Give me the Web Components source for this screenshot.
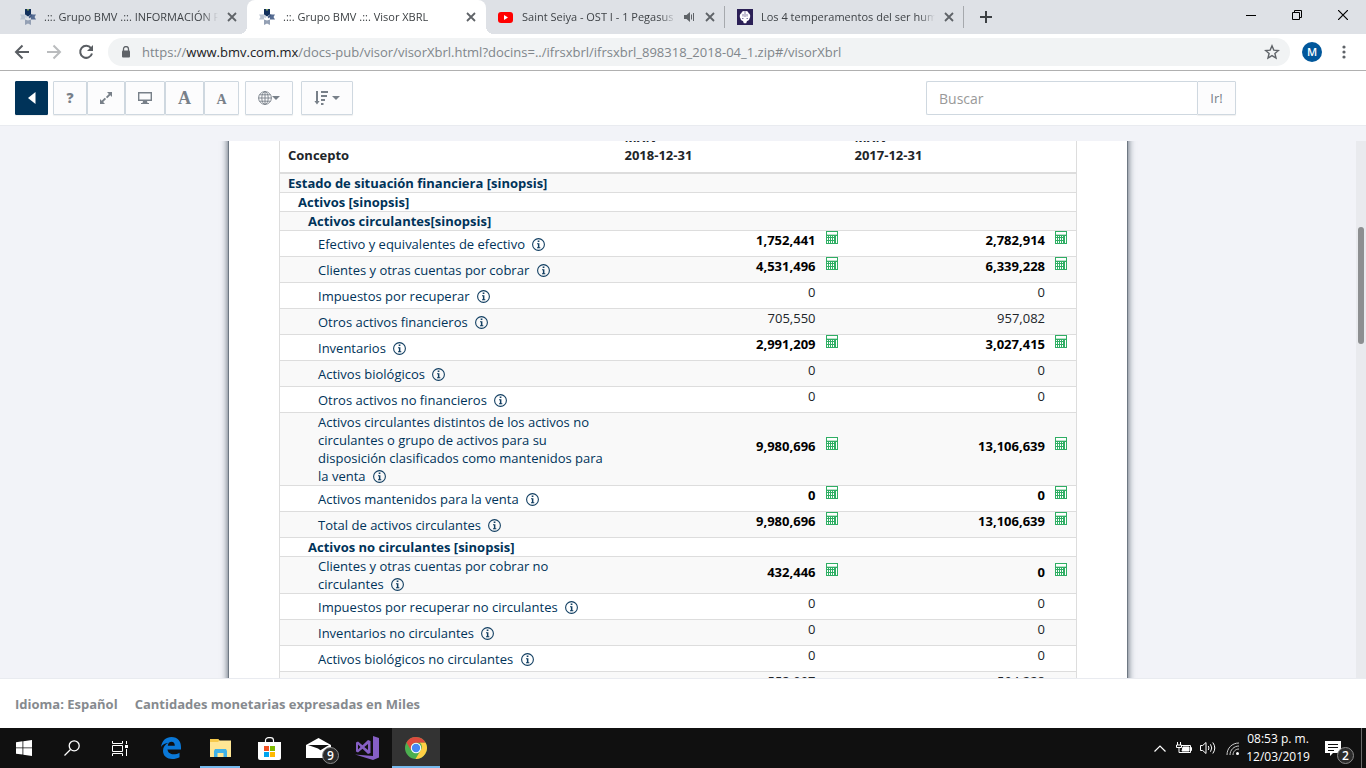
<!DOCTYPE html>
<html lang="es">
<head>
<meta charset="utf-8">
<title>.::. Grupo BMV .::. Visor XBRL</title>
<style>
html, body { margin: 0; height: 100%; }
body { font-family: "Open Sans", "Noto Sans", sans-serif; font-size: 13px; line-height: 18px; color: #212529; overflow: hidden; }
</style>
</head>
<body>
<visor-app></visor-app>
<script>
const define = (name, css, html, setup) => {
  const tpl = document.createElement('template');
  tpl.innerHTML = `<style>*{box-sizing:border-box}button{font:inherit;color:inherit;margin:0;padding:0;border:0;background:none;display:flex;align-items:center;justify-content:center}svg{display:block;flex:none}${css}</style>${html}`;
  customElements.define(name, class extends HTMLElement {
    constructor() {
      super();
      this.attachShadow({ mode: 'open' }).append(tpl.content.cloneNode(true));
    }
    connectedCallback() { if (setup) setup(this, this.shadowRoot); }
  });
};

const bmv = `<svg slot="icon" width="16" height="16" viewBox="0 0 16 16"><path d="M0 5.500h5v5H0l1.500-2.500z" fill="#bcc5d2"/><path d="M16 5.500h-5v5h5l-1.500-2.500z" fill="#566c92"/><path d="M5 10.500l3 1 3-1V16l-3-1.500L5 16z" fill="#94a0b4"/><path d="M5 0h6v5.500L8 7.500 5 5.500z" fill="#12305c"/><path d="M7 0h2v1.500H7z" fill="#7d9c5b"/><path d="M11 5.500l1.500 0L10 9.500 8.500 8z" fill="#3d5580"/><path d="M5 5.500H3.500L6 9.500 7.500 8z" fill="#c8d0db"/></svg>`;

define('browser-tab', `
:host{display:flex;flex:0 1 239px;min-width:0;position:relative;align-items:center;gap:8px;height:34px;padding:0 9px 0 12px;font-size:11px;color:#3f4347;border-right:1px solid transparent}
:host([active]){background:#fff;border-radius:8px 8px 0 0;color:#3c4043}
:host([active])::before,:host([active])::after{content:"";position:absolute;bottom:0;width:8px;height:8px}
:host([active])::before{left:-8px;background:radial-gradient(circle at 0 0,#dee1e6 8px,#fff 8px)}
:host([active])::after{right:-9px;background:radial-gradient(circle at 100% 0,#dee1e6 8px,#fff 8px)}
:host([divided]){border-image:linear-gradient(transparent 7px,#a6a9ad 7px,#a6a9ad 27px,transparent 27px) 1}
.title{flex:1;min-width:0;overflow:hidden;white-space:nowrap;-webkit-mask-image:linear-gradient(to left,transparent,#000 16px);mask-image:linear-gradient(to left,transparent,#000 16px)}
button{width:11px;height:12px;color:#5f6368}`,
`<slot name="icon"></slot><span class="title"><slot></slot></span><slot name="sound"></slot>
<button aria-label="Cerrar pestaña"><svg width="10" height="10" viewBox="0 0 10 10"><path d="M1 1l8 8M9 1L1 9" stroke="currentColor" stroke-width="1.800"/></svg></button>`);

define('browser-tabs', `
:host{display:flex;height:34px;background:#dee1e6;padding-left:8px;align-items:stretch}
.new{width:44px;height:34px}
.win{display:flex;margin-left:auto;height:29px}
.win button{width:46px}`,
`<browser-tab>${bmv}.::. Grupo BMV .::. INFORMACIÓN FINANCIERA</browser-tab>
<browser-tab active>${bmv}.::. Grupo BMV .::. Visor XBRL</browser-tab>
<browser-tab divided><svg slot="icon" width="16" height="16" viewBox="0 0 16 16"><rect x="0" y="3" width="15" height="11" rx="3" fill="#f00"/><path d="M6 6l4 2.500L6 11z" fill="#fff"/></svg>Saint Seiya - OST I - 1 Pegasus Fantasy<svg slot="sound" width="12" height="12" viewBox="0 0 12 12"><path d="M0 4h2.500L6 1v10L2.500 8H0z" fill="#5f6368"/><path d="M7.500 3.500v5M9.500 2v8" stroke="#5f6368" fill="none"/></svg></browser-tab>
<browser-tab divided><svg slot="icon" width="16" height="16" viewBox="0 0 16 16"><path d="M0 0h16v16H0z" fill="#2b2056"/><path d="M8 2C5.500 1.500 4.500 3 4.500 4 2.500 5 2.300 8 3.500 9.500 3.500 11 5 12 6 12l.8 2.300h2.400L10 12c1 0 2.500-1 2.500-2.500C13.700 8 13.500 5 11.500 4c0-1-1-2.500-3.500-2z" fill="#fff"/><path d="M8 2v6M6 5v2.500M10 5v2.500M5 9.500h1.500M9.500 9.500H11" stroke="#6a6290" stroke-width=".8"/></svg>Los 4 temperamentos del ser humano</browser-tab>
<button class="new" aria-label="Nueva pestaña"><svg width="12" height="12" viewBox="0 0 12 12"><path d="M6 0v12M0 6h12" stroke="#3c4043" stroke-width="2"/></svg></button>
<div class="win">
<button aria-label="Minimizar"><svg width="10" height="10"><path d="M0 5.500h10" stroke="#000"/></svg></button>
<button aria-label="Restaurar"><svg width="10" height="10" fill="none" stroke="#000"><path d="M.5 2.500h7v7h-7zM2.500 2.500v-2h7v7h-2"/></svg></button>
<button aria-label="Cerrar"><svg width="10" height="10"><path d="M0 0l10 10M10 0L0 10" stroke="#000" stroke-width="1.200"/></svg></button>
</div>`);

define('address-bar', `
:host{display:flex;align-items:center;height:37px;padding:0 6px;background:#fff;border-bottom:1px solid #b0b0b0;color:#5f6368}
button{width:32px;height:28px}
.pill{flex:1;min-width:0;display:flex;align-items:center;gap:11px;height:28px;margin:0 7px 0 6px;padding:0 2px 0 13px;border-radius:14px;background:#f1f3f4}
.url{flex:1;min-width:0;overflow:hidden;white-space:nowrap;font-size:13px;color:#80868b}
.url b{font-weight:400;color:#202124}
.me{width:20px;height:20px;margin:0 5px;border-radius:50%;background:#01579b;color:#fff;font-size:11px;font-weight:600}
.dots{margin-left:1px}`,
`<button aria-label="Atrás"><svg width="16" height="16" viewBox="0 0 16 16" fill="none" stroke="#5a5e63" stroke-width="2"><path d="M15 8H2.500M8.500 1.500L2 8l6.500 6.500"/></svg></button>
<button aria-label="Adelante"><svg width="16" height="16" viewBox="0 0 16 16" fill="none" stroke="#babcbe" stroke-width="2"><path d="M1 8h12.500M7.500 1.500L14 8l-6.500 6.500"/></svg></button>
<button aria-label="Recargar"><svg width="16" height="16" viewBox="0 0 16 16"><path d="M13 4.200A6 6 0 1 0 14 9.500" fill="none" stroke="#5a5e63" stroke-width="2"/><path d="M15 1v6H9z" fill="#5a5e63"/></svg></button>
<div class="pill"><svg width="10" height="12" viewBox="0 0 10 12"><path d="M2.500 5V3a2.500 2.500 0 0 1 5 0v2" fill="none" stroke="#5f6368" stroke-width="1.300"/><rect x="1" y="4.500" width="8" height="7" rx="1" fill="#5f6368"/></svg>
<span class="url">https://<b>www.bmv.com.mx</b>/docs-pub/visor/visorXbrl.html?docins=../ifrsxbrl/ifrsxbrl_898318_2018-04_1.zip#/visorXbrl</span>
<button aria-label="Marcador"><svg width="16" height="16" viewBox="0 0 16 16"><path d="M8 1.800l1.800 4.300 4.600.4-3.500 3 1.100 4.500-4-2.400L4 14l1.100-4.500-3.500-3 4.600-.4z" fill="none" stroke="#5f6368" stroke-width="1.400"/></svg></button></div>
<button class="me" aria-label="Perfil">M</button>
<button class="dots" aria-label="Menú"><svg width="4" height="14" fill="#5f6368"><circle cx="2" cy="2" r="1.600"/><circle cx="2" cy="7" r="1.600"/><circle cx="2" cy="12" r="1.600"/></svg></button>`);

const caret = `<svg width="8" height="4"><path d="M0 0h8L4 4z" fill="#788089"/></svg>`;
define('visor-toolbar', `
:host{display:flex;align-items:flex-start;height:55px;padding:10px 130px 0 15px;background:#fff;border-bottom:1px solid #e9ebf0;color:#788089}
button{height:34px;border:1px solid #cfd8e0;border-radius:1px;background:#fcfcfd;box-shadow:0 1px 1px #00000010}
.back{width:33px;background:#003359;border-color:#003359;margin-right:5px}
.w34{width:34px}.w38{width:38px}.w40{width:40px}.w39{width:39px}.w35{width:35px}
.serif{font-family:"Liberation Serif",serif;font-weight:700}
.big{font-size:18px}.small{font-size:14px;padding-top:3px}
.help{font-size:14px;font-weight:800}
.lang{width:48px;margin:0 8px 0 6px}
.sort{width:52px;gap:4px}
form{display:flex;margin-left:auto;flex:0 1 310px}
input{flex:1;min-width:0;height:34px;border:1px solid #cfd8e0;border-radius:2px 0 0 2px;border-right:0;padding:0 12px;font:14px "Open Sans",sans-serif;color:#555;outline:0}
input::placeholder{color:#999;opacity:1}`,
`<button class="back" aria-label="Regresar"><svg width="8" height="12"><path d="M7.500 0v12L0 6z" fill="#fff"/></svg></button>
<button class="w34 help">?</button>
<button class="w38" aria-label="Ampliar"><svg width="14" height="14" viewBox="0 0 14 14" fill="#788089"><path d="M8 1h5v5l-1.700-1.700-3 3-1.400-1.400 3-3zM6 13H1V8l1.700 1.700 3-3 1.400 1.400-3 3z"/></svg></button>
<button class="w40" aria-label="Pantalla"><svg width="16" height="14" viewBox="0 0 16 14"><path d="M1.700 1.700h12.600v7.600H1.700z" fill="none" stroke="#788089" stroke-width="1.400"/><path d="M6 10h4l.5 2H12v1H4v-1h1.500z" fill="#788089"/></svg></button>
<button class="w39 serif big">A</button>
<button class="w35 serif small">A</button>
<button class="lang" aria-label="Idioma"><svg width="14" height="14" viewBox="0 0 14 14" fill="none" stroke="#788089" stroke-width=".9"><circle cx="7" cy="7" r="6.400"/><ellipse cx="7" cy="7" rx="3.200" ry="6.400"/><path d="M7 .5v13M.5 7h13M1.500 3.800h11M1.500 10.200h11"/></svg>${caret}</button>
<button class="sort" aria-label="Ordenar"><svg width="14" height="14" viewBox="0 0 14 14" fill="#788089"><path d="M2 0h2v10h1.600L3 13.500.4 10H2zM7 0h7v2H7zM7 4h6v2H7zM7 8h4v2H7zM7 12h2.500v2H7z"/></svg>${caret}</button>
<form><input type="search" aria-label="Buscar" placeholder="Buscar"><button class="w39" type="button">Ir!</button></form>`);

const info = ` <svg class="info" width="13" height="13" viewBox="0 0 13 13"><circle cx="6.500" cy="6.500" r="5.900" fill="none" stroke="#123f62" stroke-width="1.100"/><path d="M5.700 2.500h1.700V4H5.700zM5 5.200h2.400v4h.9v1H5v-1h.9v-3H5z" fill="#123f62"/></svg>`;
const calc = `<svg width="12" height="13" viewBox="0 0 12 13"><path d="M0 0h12v13H0z" fill="#2fae64"/><path d="M1 1h10v2H1z" fill="#fff"/><path d="M1 3h10v1H1z" fill="#b9e2c9"/><path d="M1 5h1v1H1zM3 5h1v1H3zM5 5h1v1H5zM7 5h1v1H7zM1 7h1v2H1zM3 7h1v2H3zM5 7h1v2H5zM7 7h1v2H7zM1 10h1v2H1zM3 10h1v2H3zM5 10h1v2H5zM7 10h1v2H7zM10 5h1v7h-1z" fill="#fff"/></svg>`;
/* Each row: [indent level, concept, current value, previous value, has calculation] */
const rows = [
  [0, 'Estado de situación financiera [sinopsis]'],
  [1, 'Activos [sinopsis]'],
  [2, 'Activos circulantes[sinopsis]'],
  [3, 'Efectivo y equivalentes de efectivo', '1,752,441', '2,782,914', 1],
  [3, 'Clientes y otras cuentas por cobrar', '4,531,496', '6,339,228', 1],
  [3, 'Impuestos por recuperar', '0', '0'],
  [3, 'Otros activos financieros', '705,550', '957,082'],
  [3, 'Inventarios', '2,991,209', '3,027,415', 1],
  [3, 'Activos biológicos', '0', '0'],
  [3, 'Otros activos no financieros', '0', '0'],
  [3, 'Activos circulantes distintos de los activos no circulantes o grupo de activos para su disposición clasificados como mantenidos para la venta', '9,980,696', '13,106,639', 1],
  [3, 'Activos mantenidos para la venta', '0', '0', 1],
  [3, 'Total de activos circulantes', '9,980,696', '13,106,639', 1],
  [2, 'Activos no circulantes [sinopsis]'],
  [3, 'Clientes y otras cuentas por cobrar no circulantes', '432,446', '0', 1],
  [3, 'Impuestos por recuperar no circulantes', '0', '0'],
  [3, 'Inventarios no circulantes', '0', '0'],
  [3, 'Activos biológicos no circulantes', '0', '0'],
  [3, '', '553,097', '594,228']
];
define('report-table', `
:host{display:block}
table{width:100%;border-collapse:collapse;table-layout:fixed;border:1px solid #ddd;border-bottom:0}
col.v{width:230px}
th,td{padding:0 8px;text-align:left;vertical-align:middle}
thead th{padding:8px;vertical-align:bottom;border-bottom:2px solid #ddd}
tbody th,tbody td{border-bottom:1px solid #ddd}
tbody th{font-weight:400;color:#003359}
tbody th.group{font-weight:700}
tbody tr:nth-child(odd){background:#f9f9f9}
.l1{padding-left:18px}.l2{padding-left:28px}.l3{padding-left:38px}
.info{display:inline-block;vertical-align:-2px;margin-left:4px}
.val{display:flex;justify-content:flex-end;gap:10px;height:25px}
.val i{width:13px}
.calc{font-weight:700;color:#000}`,
`<table><colgroup><col><col class="v"><col class="v"></colgroup>
<thead><tr><th scope="col">Concepto</th><th scope="col">MXN<br>2018-12-31</th><th scope="col">MXN<br>2017-12-31</th></tr></thead><tbody></tbody></table>`,
(host, root) => {
  const cell = (v, c) => `<td${c ? ' class="calc"' : ''}><div class="val"><span>${v}</span><i>${c ? calc : ''}</i></div></td>`;
  root.querySelector('tbody').innerHTML = rows.map(([l, name, a, b, c]) => a === undefined
    ? `<tr><th scope="rowgroup" colspan="3" class="group l${l}">${name}</th></tr>`
    : `<tr><th scope="row" class="l${l}">${name}${name ? info : ''}</th>${cell(a, c)}${cell(b, c)}</tr>`).join('');
});

define('report-viewer', `
:host{display:flex;flex:1;min-height:0;padding-top:15px;background:#f2f3f8}
.scroll{flex:1;min-width:0;overflow:hidden}
.sheet{max-width:900px;min-height:640px;margin:0 auto;padding:0 50px;background:#fff;border:solid #6e7883;border-width:0 1px;box-shadow:0 0 7px #4b5866}
.track{width:10px;background:#e9eaee;padding:86px 2px 0}
.thumb{height:117px;border-radius:3px;background:#8d8f91}`,
`<div class="scroll"><div class="sheet"><report-table></report-table></div></div><div class="track"><div class="thumb"></div></div>`);

define('visor-footer', `
:host{display:flex;align-items:center;gap:17px;height:50px;padding:0 15px;background:#fff;border-top:1px solid #e9ebf0;font-weight:700;color:#868a8e}`,
`<span>Idioma: Español</span><span>Cantidades monetarias expresadas en Miles</span>`);

define('task-bar', `
:host{display:flex;height:40px;background:#101010;color:#fff;font-size:12px;line-height:18px}
button{width:48px;height:40px;position:relative}
.apps{display:flex;gap:1px;margin-left:3px}
.open::after{content:"";position:absolute;left:4px;right:4px;bottom:0;height:2px;background:#76b9ed}
.current{background:#333}
.current::after{left:0;right:0}
.badge{position:absolute;left:28px;top:19px;width:17px;height:17px;border:1px solid #8a8a8a;border-radius:50%;background:#2b2b2b;font-size:12px;font-weight:600;line-height:15px;text-align:center}
.tray{display:flex;margin-left:auto;align-items:center}
.tray .i{width:24px}
.clock{width:62px;margin-left:3px;white-space:nowrap;height:36px}
.note{width:48px;margin-right:4px}
.desk{width:5px;height:40px;border-left:1px solid #6a6a6a}`,
`<button aria-label="Inicio"><svg width="16" height="16" viewBox="0 0 16 16" fill="#fff"><path d="M0 2.200L6.500 1.300v6.200H0zM7.300 1.200L16 0v7.500H7.300zM0 8.300h6.500v6.300L0 13.700zM7.300 8.300H16V16l-8.700-1.200z"/></svg></button>
<button aria-label="Buscar"><svg width="16" height="16" viewBox="0 0 16 16" fill="none" stroke="#fff" stroke-width="1.300"><circle cx="10.200" cy="5.800" r="5"/><path d="M6.500 9.500L.5 15.500"/></svg></button>
<button aria-label="Vista de tareas"><svg width="16" height="15" viewBox="0 0 16 15" fill="none" stroke="#fff"><path d="M.5 0v2.500h10V0M.5 15v-2.500h10V15M.5 4.500h10v6H.5zM14.500 0v3M14.500 8v7"/><path d="M13 4h3v3h-3z" fill="#fff" stroke="none"/></svg></button>
<div class="apps">
<button aria-label="Edge"><svg width="20" height="22" viewBox="0 0 20 22"><path d="M0 10C1 3.500 5 0 10.500 0 17 0 20 4.500 20 10v2.500H6.500c.3 3.200 3 4.800 6 4.800 2.300 0 4.400-.6 6-1.600v4.500c-2 1.200-4.700 1.800-7.300 1.800C6 22 2 19 2 13.800c0-3.800 2.300-6.500 5.500-8C4.500 6 1.500 7.500 0 10zm6.800-1.200h7c0-2.600-1.200-4-3.400-4-2 0-3.300 1.500-3.600 4z" fill="#0a78d7"/></svg></button>
<button class="open" aria-label="Explorador"><svg width="21" height="18" viewBox="0 0 21 18"><path d="M0 0h8l1.500 1.500H21V18H0z" fill="#ffe694"/><path d="M0 0h8l1.500 1.500L8 3H0z" fill="#f6c94b"/><path d="M4 18v-6l1-2h11l1 2v6h-3.500v-4h-6v4z" fill="#3fb2e8"/></svg></button>
<button aria-label="Tienda"><svg width="23" height="23" viewBox="0 0 23 23"><path d="M7.500 6V3.500C7.500 1.500 9 .7 10.500.7h2c1.500 0 3 .8 3 2.800V6" fill="none" stroke="#fff" stroke-width="1.200"/><path d="M0 5h23v16q0 2-2 2H2q-2 0-2-2z" fill="#fff"/><path d="M6 9h5v5H6z" fill="#f25022"/><path d="M12 9h5v5h-5z" fill="#7fba00"/><path d="M6 15h5v5H6z" fill="#00a4ef"/><path d="M12 15h5v5h-5z" fill="#ffb900"/></svg></button>
<button aria-label="Correo"><svg width="25" height="20" viewBox="0 0 25 20"><path d="M0 7L12.500 0 25 7v13H0z" fill="#fff"/><path d="M2 7h21l-8.500 5.200L12 10.500z" fill="#101010"/></svg><span class="badge">9</span></button>
<button aria-label="Visual Studio"><svg width="24" height="24" viewBox="0 0 24 24" fill="#865fc5"><path d="M18 0l6 2v19.500L18 24 0 18.500l18 1.500z"/><path d="M1 6.500L3 5.500l4.500 3.700L13 4l2.500 1v12L13 18l-5.500-5.200L3 16.500l-2-1zM3 8.500v5L5.500 11zM9.300 11l3.700 3V8z" fill-rule="evenodd"/></svg></button>
<button class="open current" aria-label="Chrome"><svg width="22" height="22" viewBox="0 0 22 22"><circle cx="11" cy="11" r="11" fill="#4caf50"/><path d="M1.500 5.500A11 11 0 0 1 20.600 5.800H11a5.200 5.200 0 0 0-5 3.800l-.2 3.400z" fill="#dd4b3e"/><path d="M20.600 5.800A11 11 0 0 1 10.500 22l5-8.500a5.200 5.200 0 0 0-.7-7.700z" fill="#ffce44"/><circle cx="11" cy="11" r="5.200" fill="#fff"/><circle cx="11" cy="11" r="4.200" fill="#4587f3"/></svg></button>
</div>
<div class="tray">
<button class="i" aria-label="Iconos ocultos"><svg width="12" height="7"><path d="M.5 6.500L6 1l5.500 5.500" fill="none" stroke="#fff" stroke-width="1.200"/></svg></button>
<button class="i" aria-label="Batería"><svg width="16" height="12" viewBox="0 0 16 12" fill="none" stroke="#fff"><path d="M5.500 3.500h9v7h-9M14.500 5.500h1v3h-1M1.500 0v3M4.500 0v3M.5 3v2.500h5V3zM3 5.500v5h3"/><path d="M7 5h6v4H6z" fill="#fff"/></svg></button>
<button class="i" aria-label="Volumen"><svg width="16" height="14" viewBox="0 0 16 14" fill="none" stroke="#fff"><path d="M.5 4.500h2.200L6 1.500v11l-3.300-3H.5zM8.300 5q1.300 2 0 4M10.500 3.300q2.500 3.700 0 7.400M12.800 1.500q4 5.500 0 11"/></svg></button>
<button class="i" aria-label="Red"><svg width="13" height="13" viewBox="0 0 13 13" fill="none" stroke="#ccc"><path d="M1 13C1 6 6 1 13 1M4 13c0-5 4-9 9-9M7 13c0-3.500 2.500-6 6-6"/><circle cx="11.500" cy="11.500" r="1.500" fill="#fff" stroke="none"/></svg></button>
<button class="clock">08:53 p. m.<br>12/03/2019</button>
<button class="note" aria-label="Notificaciones"><svg width="16" height="15" viewBox="0 0 16 15"><path d="M0 0h16v12H8l-3 3v-3H0z" fill="#fff"/><path d="M3 3.500h10M3 6.500h10M3 9.500h6" stroke="#101010"/></svg><span class="badge">2</span></button>
<div class="desk"></div>
</div>`);

define('visor-app', `:host{display:flex;flex-direction:column;height:100vh;background:#fff}`,
`<browser-tabs></browser-tabs><address-bar></address-bar><visor-toolbar></visor-toolbar><report-viewer></report-viewer><visor-footer></visor-footer><task-bar></task-bar>`);

/* Open the report just below the start of its column headings. */
document.querySelector('visor-app').shadowRoot.querySelector('report-viewer').shadowRoot.querySelector('.scroll').scrollTop = 22;
</script>
</body>
</html>
